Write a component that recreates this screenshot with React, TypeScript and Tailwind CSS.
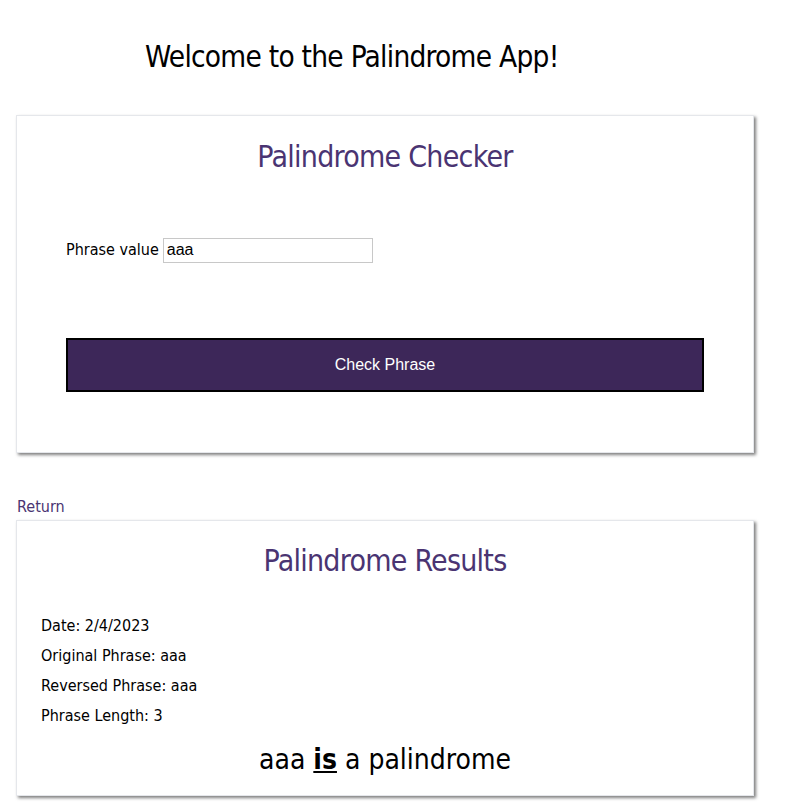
export default function App() {
  const font = "font-['DejaVu_Sans_Condensed','DejaVu_Sans',sans-serif] font-stretch-condensed";
  return (
    <div className={`bg-white min-h-screen text-black ${font}`}>
      <h1 className="pt-[35px] pl-[145px] text-[29.5px] leading-[44px] tracking-tight">
        Welcome to the Palindrome App!
      </h1>

      <div className="mt-[36px] ml-[16px] w-[738px] h-[338px] bg-white border border-gray-200 shadow-[2px_2px_3px_rgba(0,0,0,0.5)] flex flex-col px-[49px]">
        <h2 className="mt-[19px] text-center text-[30px] leading-[44px] text-[#4a3472] tracking-tight">
          Palindrome Checker
        </h2>
        <div className="mt-[58px] flex items-center gap-[4px]">
          <label className="text-[16px] leading-[26px]">Phrase value</label>
          <input
            defaultValue="aaa"
            className="w-[210px] h-[25px] border border-[#c8c8c8] px-[3px] text-[16px] font-['Liberation_Sans',sans-serif] outline-none"
          />
        </div>
        <button className="mt-[75px] w-[638px] h-[54px] bg-[#3d2759] border-2 border-black text-white text-[16px] font-['Liberation_Sans',sans-serif]">
          Check Phrase
        </button>
      </div>

      <div className="mt-[43px] ml-[17px] text-[16px] leading-[22px] text-[#4a3472]">Return</div>

      <div className="mt-[2px] ml-[16px] w-[738px] h-[276px] bg-white border border-gray-200 shadow-[2px_2px_3px_rgba(0,0,0,0.5)] flex flex-col">
        <h2 className="mt-[18px] text-center text-[30px] leading-[44px] text-[#4a3472] tracking-tight">
          Palindrome Results
        </h2>
        <div className="mt-[28px] pl-[24px] flex flex-col text-[16px] leading-[30px]">
          <div>Date: 2/4/2023</div>
          <div>Original Phrase: aaa</div>
          <div>Reversed Phrase: aaa</div>
          <div>Phrase Length: 3</div>
        </div>
        <div className="mt-[9px] text-center text-[28px] leading-[40px]">
          aaa <span className="font-bold underline">is</span> a palindrome
        </div>
      </div>
    </div>
  );
}
